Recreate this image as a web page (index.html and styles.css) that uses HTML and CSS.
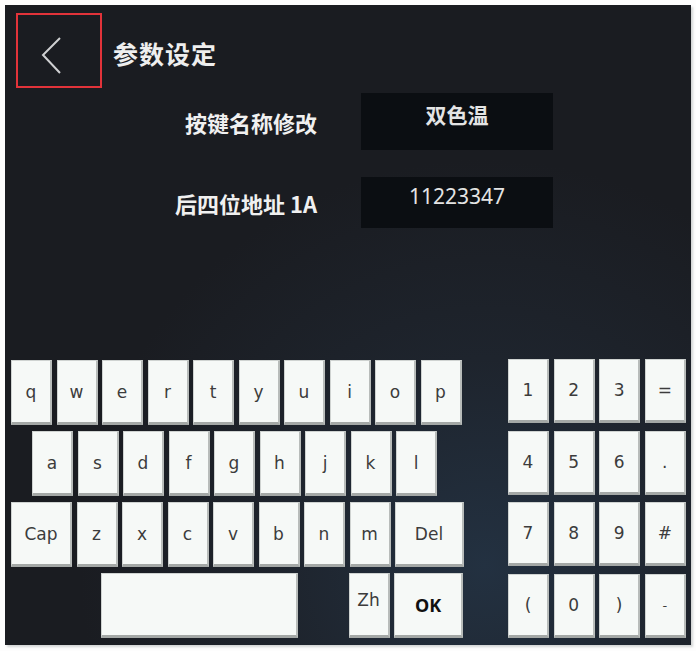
FILE: index.html
```html
<!DOCTYPE html>
<html lang="zh-CN">
<head>
    <meta charset="UTF-8">
    <meta name="viewport" content="width=device-width, initial-scale=1.0">
    <title>参数设定</title>
    <link rel="stylesheet" href="styles.css">
</head>
<body>
    <div class="screen">
        <div class="header">
            <button class="back">
                <svg width="82" height="71" viewBox="0 0 82 71">
                    <polyline points="42,23 25,40 42,58" fill="none" stroke="#cfd0d2" stroke-width="2"/>
                </svg>
            </button>
            <h1 class="title">参数设定</h1>
        </div>

        <div class="form">
            <label class="label">按键名称修改</label>
            <div class="field field-tall">双色温</div>
            <label class="label">后四位地址 1A</label>
            <div class="field">11223347</div>
        </div>

        <div class="keyboard">
            <div class="letters">
                <div class="row">
                    <span class="key">q</span><span class="key">w</span><span class="key">e</span><span class="key">r</span><span class="key">t</span><span class="key">y</span><span class="key">u</span><span class="key">i</span><span class="key">o</span><span class="key">p</span>
                </div>
                <div class="row row-2">
                    <span class="key">a</span><span class="key">s</span><span class="key">d</span><span class="key">f</span><span class="key">g</span><span class="key">h</span><span class="key">j</span><span class="key">k</span><span class="key">l</span>
                </div>
                <div class="row">
                    <span class="key key-cap">Cap</span><span class="key">z</span><span class="key">x</span><span class="key">c</span><span class="key">v</span><span class="key">b</span><span class="key">n</span><span class="key">m</span><span class="key key-del">Del</span>
                </div>
                <div class="row row-4">
                    <span class="key key-space"></span><span class="key key-zh">Zh</span><span class="key key-ok">OK</span>
                </div>
            </div>

            <div class="numpad">
                <span class="key">1</span><span class="key">2</span><span class="key">3</span><span class="key">=</span>
                <span class="key">4</span><span class="key">5</span><span class="key">6</span><span class="key">.</span>
                <span class="key">7</span><span class="key">8</span><span class="key">9</span><span class="key">#</span>
                <span class="key">(</span><span class="key">0</span><span class="key">)</span><span class="key small">-</span>
            </div>
        </div>
    </div>
</body>
</html>
```

FILE: styles.css
```css
* {
    margin: 0;
    padding: 0;
    box-sizing: border-box;
}

body {
    background-color: #fdfdfd;
    font-family: "Noto Sans CJK SC", "Noto Sans", sans-serif;
    padding: 5px;
}

.screen {
    width: 686px;
    height: 640px;
    padding: 8px 0 0 6px;
    background:
        radial-gradient(circle at 480px 560px, #233141 0%, #1e242d 28%, #1a1c21 55%),
        #1a1c21;
    box-shadow: 2px 2px 2px #d4d6d6;
}

.header {
    display: flex;
    align-items: center;
    padding-left: 5px;
}

.back {
    width: 86px;
    height: 75px;
    border: 2px solid #e2333a;
    background: transparent;
    display: flex;
}

.title {
    margin: 4px 0 0 11px;
    font-size: 25px;
    font-weight: 700;
    color: #eeeeee;
    letter-spacing: 1px;
}

.form {
    display: grid;
    grid-template-columns: 306px 192px;
    column-gap: 44px;
    row-gap: 27px;
    align-items: center;
    margin-top: 5px;
}

.label {
    text-align: right;
    font-size: 22px;
    font-weight: 700;
    color: #f0f0f0;
}

.field {
    height: 51px;
    background-color: #0b0e12;
    color: #e4e4e4;
    font-size: 21px;
    text-align: center;
    padding-top: 5px;
    font-family: "Noto Sans", "Noto Sans CJK SC", sans-serif;
}

.field-tall {
    height: 57px;
    padding-top: 6px;
    font-family: "Noto Sans CJK SC", sans-serif;
    font-weight: 700;
    font-size: 21px;
}

.keyboard {
    display: flex;
    margin-top: 131px;
}

.letters {
    display: flex;
    flex-direction: column;
    gap: 6px;
    padding-top: 1px;
}

.row {
    display: flex;
    gap: 4.5px;
    height: 65px;
}

.row-2 {
    padding-left: 21px;
}

.row-4 {
    padding-left: 90px;
}

.key {
    width: 41px;
    height: 100%;
    display: flex;
    align-items: center;
    justify-content: center;
    background-color: #f6f9f7;
    border: 1px solid #cfd3d1;
    border-bottom: 3px solid #a4a8a6;
    border-right: 2px solid #b8bcba;
    color: #3c3c3c;
    font-family: "DejaVu Sans", sans-serif;
    font-size: 17px;
}

.key-cap {
    width: 61px;
}

.key-del {
    width: 69px;
}

.key-space {
    width: 197px;
    margin-right: 46px;
}

.key-zh {
    align-items: flex-start;
    padding-top: 16px;
}

.key-ok {
    width: 69px;
    font-family: "Noto Sans", sans-serif;
    font-weight: 700;
    color: #111111;
    font-size: 18px;
}

.numpad {
    margin-left: 44px;
    display: grid;
    grid-template-columns: repeat(4, 41px);
    grid-auto-rows: 64px;
    column-gap: 4.6px;
    row-gap: 7.7px;
}

.numpad .key {
    width: auto;
}

.small {
    font-size: 13px;
}
```
